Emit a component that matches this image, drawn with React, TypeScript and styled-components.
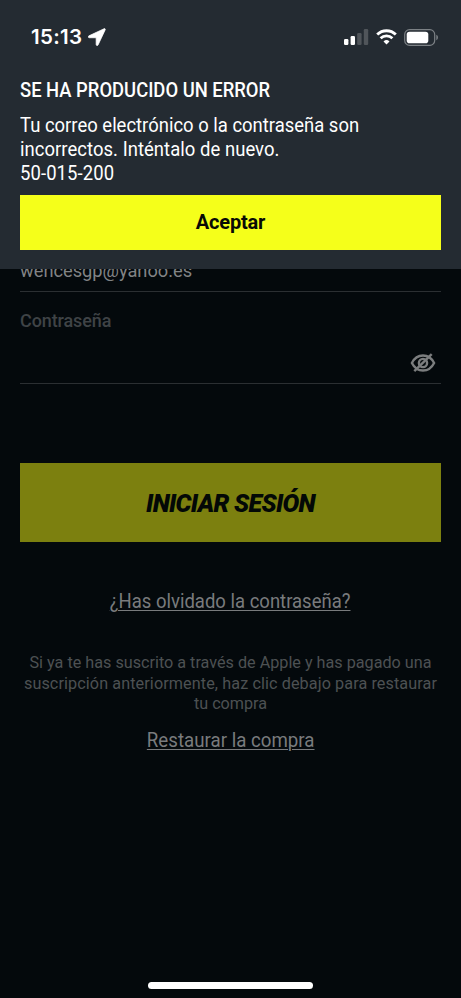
import React from 'react';
import styled, { createGlobalStyle } from 'styled-components';

const GlobalStyle = createGlobalStyle`
  *, *::before, *::after { box-sizing: border-box; }
  body { margin: 0; background: #04090c; }
  h1, p { margin: 0; }
  button, input { font: inherit; border: 0; padding: 0; border-radius: 0; }
`;

const Phone = styled.div`
  position: relative;
  width: 461px;
  height: 998px;
  overflow: hidden;
  background: #04090c;
  font-family: Roboto, "Liberation Sans", sans-serif;
`;

const LoginScreen = styled.main`
  display: flex;
  flex-direction: column;
  height: 100%;
  padding: 257px 20px 9px;
`;

const Field = styled.div<{ $height: number }>`
  display: flex;
  flex: none;
  flex-direction: column;
  justify-content: space-between;
  height: ${(p) => p.$height}px;
  border-bottom: 1px solid #2b2f32;
`;

const FieldValue = styled.span`
  font-size: 19px;
  line-height: 27px;
  transform: scaleX(0.96);
  transform-origin: left;
  color: #818385;
`;

const FieldLabel = styled.label`
  padding-top: 17px;
  font-size: 18px;
  font-weight: 500;
  line-height: 24px;
  letter-spacing: -0.1px;
  color: #3f4346;
`;

const RevealButton = styled.button`
  display: flex;
  align-self: flex-end;
  margin: 0 5px 10px 0;
  background: none;
  color: #7b7d7e;
`;

const LoginButton = styled.button`
  flex: none;
  height: 79px;
  margin-top: 79px;
  padding-top: 2px;
  background: #7c800f;
  color: #030806;
  font-size: 25px;
  font-weight: 900;
  font-style: italic;
  letter-spacing: -0.7px;
`;

const TextLink = styled.a<{ $top: number; $scale: number }>`
  align-self: center;
  margin-top: ${(p) => p.$top}px;
  font-size: 20px;
  font-weight: 400;
  line-height: 24px;
  transform: scaleX(${(p) => p.$scale});
  color: #797b7d;
  text-decoration: underline;
  text-decoration-thickness: 1px;
  text-underline-offset: 2px;
  white-space: nowrap;
`;

const Notice = styled.p`
  margin: 39px -15px 0;
  text-align: center;
  font-size: 17px;
  font-weight: 400;
  line-height: 20.5px;
  color: #4d5153;
  white-space: nowrap;
  transform: scaleX(0.952);
`;

const NoticeLine = styled.span<{ $spacing: number }>`
  display: block;
  letter-spacing: ${(p) => p.$spacing}px;
`;

const HomeIndicator = styled.div`
  width: 165px;
  height: 7px;
  margin: auto auto 0;
  border-radius: 4px;
  background: #fff;
`;

const ErrorSheet = styled.section`
  position: absolute;
  inset: 0 0 auto;
  display: flex;
  flex-direction: column;
  height: 269px;
  padding: 0 20px;
  background: #242b32;
  color: #fff;
`;

const StatusBar = styled.header`
  display: flex;
  align-items: center;
  justify-content: space-between;
  height: 74px;
  padding: 0 2px 0 11px;
`;

const StatusGroup = styled.div<{ $gap: number }>`
  display: flex;
  align-items: center;
  gap: ${(p) => p.$gap}px;
`;

const Clock = styled.span`
  margin-top: -2px;
  font-family: Inter, sans-serif;
  font-size: 20.5px;
  font-weight: 600;
  letter-spacing: 0.3px;
`;

const ErrorTitle = styled.h1`
  padding-top: 4px;
  font-size: 20px;
  font-weight: 500;
  line-height: 24px;
  transform: scaleX(0.92);
  transform-origin: left;
  white-space: nowrap;
`;

const ErrorText = styled.p`
  margin-top: 11px;
  font-size: 20px;
  font-weight: 400;
  line-height: 24px;
  transform: scaleX(0.923);
  transform-origin: left;
  white-space: nowrap;
`;

const ErrorLine = styled.span<{ $spacing: number }>`
  display: block;
  letter-spacing: ${(p) => p.$spacing}px;
`;

const AcceptButton = styled.button`
  height: 55px;
  margin-top: 10px;
  padding-bottom: 1px;
  background: #f5ff1a;
  color: #080a05;
  font-size: 20px;
  font-weight: 700;
  letter-spacing: -0.2px;
`;

const LocationIcon = () => (
  <svg width="18" height="18" viewBox="0 0 17 17" fill="#fff" stroke="#fff" strokeWidth=".7" strokeLinejoin="round">
    <path d="M15.2.7.9 7.4c-1 .5-.7 1.8.4 1.8h6.4v6.4c0 1.1 1.4 1.4 1.8.4l6.7-14.2c.4-.8-.3-1.5-1-1.1Z" />
  </svg>
);

const SignalIcon = () => (
  <svg width="25" height="16" viewBox="0 0 25 16" fill="#fff">
    <rect x="0" y="10" width="4.4" height="6" rx="1.2" />
    <rect x="6.6" y="7" width="4.4" height="9" rx="1.2" />
    <rect x="13.2" y="4" width="4.4" height="12" rx="1.2" fill="#50555a" />
    <rect x="19.8" y="0" width="4.4" height="16" rx="1.2" fill="#50555a" />
  </svg>
);

const WifiIcon = () => (
  <svg width="21" height="16" viewBox="0 0 21 16" fill="none" stroke="#fff" strokeWidth="2.8">
    <path d="M1.2 5.6a13.2 13.2 0 0 1 18.6 0" />
    <path d="M4.6 9.2a8.4 8.4 0 0 1 11.8 0" />
    <path d="m10.5 15.6 3-3.1a4.3 4.3 0 0 0-6 0Z" fill="#fff" stroke="none" />
  </svg>
);

const BatteryIcon = () => (
  <svg width="35" height="17" viewBox="0 0 35 17">
    <rect x=".7" y=".7" width="30" height="15.6" rx="4.8" fill="none" stroke="#7c8185" strokeWidth="1.2" />
    <rect x="2.7" y="2.8" width="21.6" height="11.4" rx="2.8" fill="#fff" />
    <path d="M32.3 5.8c2.2.8 2.2 4.6 0 5.4Z" fill="#7c8185" />
  </svg>
);

const EyeOffIcon = () => (
  <svg width="26" height="20" viewBox="0 0 26 20" fill="none" stroke="currentColor" strokeWidth="2.4">
    <path d="M1.9 10C4.4 5 8.3 2.5 13 2.5S21.6 5 24.1 10c-2.5 5-6.4 7.5-11.1 7.5S4.4 15 1.9 10Z" />
    <circle cx="13" cy="10" r="4.1" />
    <path d="M4.3 18.1 21.7 1.2" />
  </svg>
);

export default function App() {
  return (
    <>
      <GlobalStyle />
      <Phone>
        <LoginScreen>
          <Field $height={35}>
            <FieldValue>wencesgp@yahoo.es</FieldValue>
          </Field>
          <Field $height={92}>
            <FieldLabel>Contraseña</FieldLabel>
            <RevealButton aria-label="Mostrar contraseña">
              <EyeOffIcon />
            </RevealButton>
          </Field>
          <LoginButton>INICIAR SESIÓN</LoginButton>
          <TextLink $top={47} $scale={0.925}>¿Has olvidado la contraseña?</TextLink>
          <Notice>
            <NoticeLine $spacing={0}>Si ya te has suscrito a través de Apple y has pagado una</NoticeLine>
            <NoticeLine $spacing={0.1}>suscripción anteriormente, haz clic debajo para restaurar</NoticeLine>
            <NoticeLine $spacing={0}>tu compra</NoticeLine>
          </Notice>
          <TextLink $top={14} $scale={0.935}>Restaurar la compra</TextLink>
          <HomeIndicator />
        </LoginScreen>
        <ErrorSheet role="alertdialog">
          <StatusBar>
            <StatusGroup $gap={6}>
              <Clock>15:13</Clock>
              <LocationIcon />
            </StatusGroup>
            <StatusGroup $gap={7}>
              <SignalIcon />
              <WifiIcon />
              <BatteryIcon />
            </StatusGroup>
          </StatusBar>
          <ErrorTitle>SE HA PRODUCIDO UN ERROR</ErrorTitle>
          <ErrorText>
            <ErrorLine $spacing={0}>Tu correo electrónico o la contraseña son</ErrorLine>
            <ErrorLine $spacing={0.05}>incorrectos. Inténtalo de nuevo.</ErrorLine>
            <ErrorLine $spacing={0.1}>50-015-200</ErrorLine>
          </ErrorText>
          <AcceptButton>Aceptar</AcceptButton>
        </ErrorSheet>
      </Phone>
    </>
  );
}
